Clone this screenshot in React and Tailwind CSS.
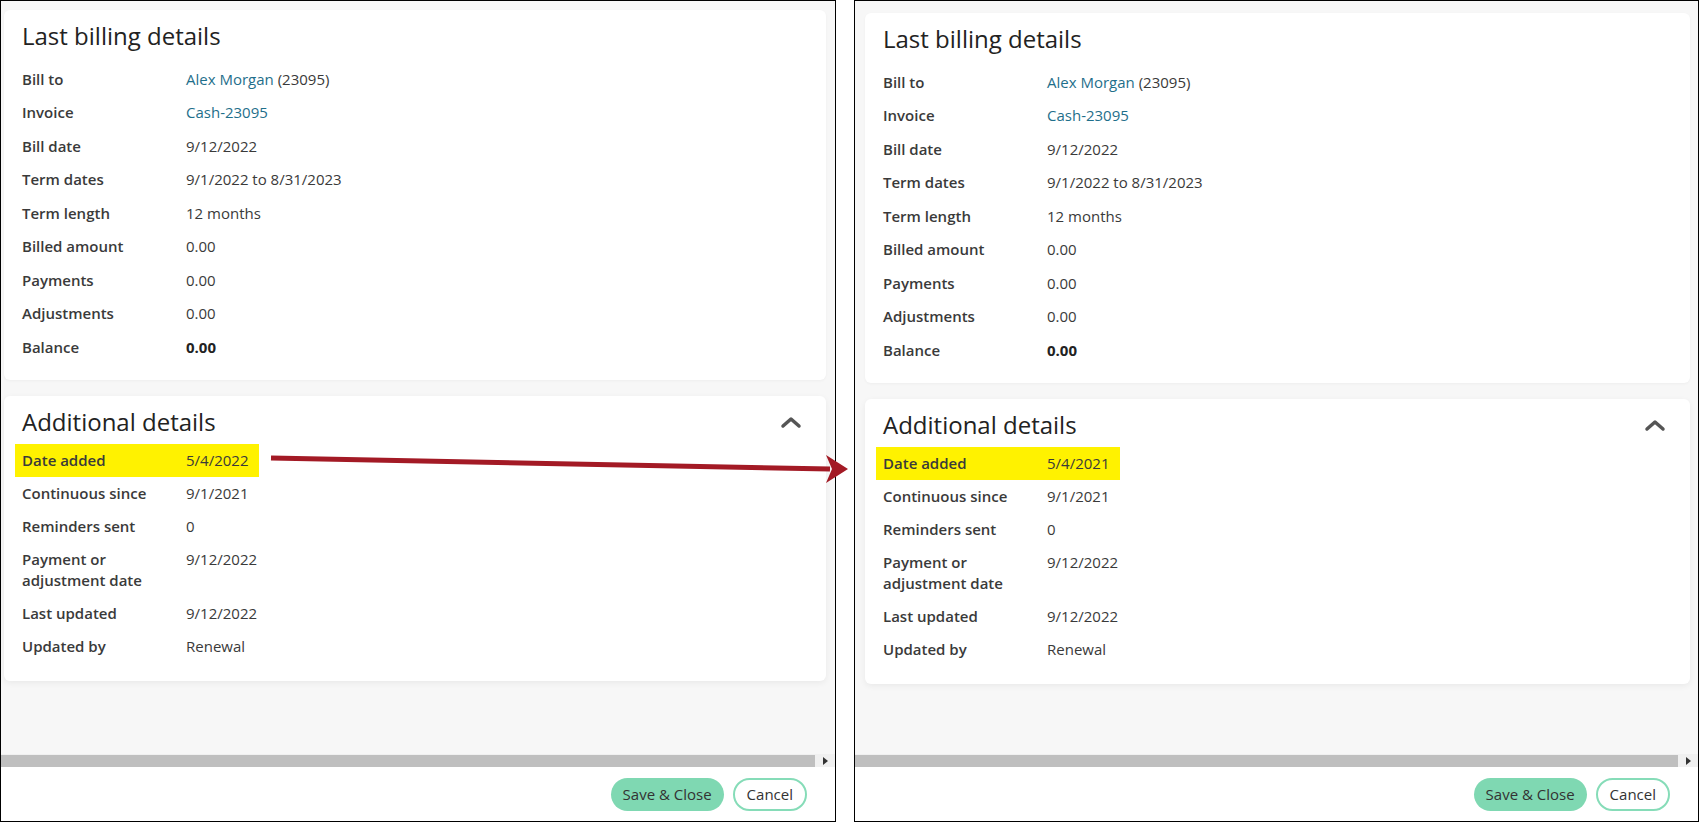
import React from 'react';

const billing = [
  ['Bill to', <><span className="text-[#1f6f8b]">Alex Morgan</span> (23095)</>],
  ['Invoice', <span className="text-[#1f6f8b]">Cash-23095</span>],
  ['Bill date', '9/12/2022'],
  ['Term dates', '9/1/2022 to 8/31/2023'],
  ['Term length', '12 months'],
  ['Billed amount', '0.00'],
  ['Payments', '0.00'],
  ['Adjustments', '0.00'],
  ['Balance', <span className="font-bold text-[#222]">0.00</span>],
];

const Row = ({ label, value, highlight }) => (
  <div
    className={`flex items-center min-h-[33px] py-[6px] leading-[21px] ${
      highlight ? 'bg-[#fff200] -ml-[7px] pl-[7px] w-[244px]' : ''
    }`}
  >
    <div className="w-[164px] font-semibold text-[#3a3a3a] self-start">{label}</div>
    <div className="text-[#3a3a3a] self-start">{value}</div>
  </div>
);

const Panel = ({ dateAdded, shift }) => {
  const extra = [
    ['Date added', dateAdded],
    ['Continuous since', '9/1/2021'],
    ['Reminders sent', '0'],
    [<>Payment or<br />adjustment date</>, '9/12/2022'],
    ['Last updated', '9/12/2022'],
    ['Updated by', 'Renewal'],
  ];
  return (
    <div className="h-[822px] border border-black flex flex-col bg-white" style={{ width: shift ? 845 : 836 }}>
      <div className={`flex-1 bg-[#f7f7f7] flex flex-col gap-4 ${shift ? 'pt-[12px] pl-[10px] pr-[8px]' : 'pt-[9px] pl-[3px] pr-[9px]'}`}>
        <div className="bg-white rounded-md shadow-[0_1px_3px_rgba(0,0,0,0.04)] px-[18px] pt-[10px] pb-[16px]">
          <h2 className="text-[24px] leading-[32px] text-[#222] mb-[10px]">Last billing details</h2>
          <div className="text-[15px]">
            {billing.map(([l, v], i) => (
              <div key={i} className="flex items-center h-[33.5px]">
                <div className="w-[164px] font-semibold text-[#3a3a3a]">{l}</div>
                <div className="text-[#3a3a3a]">{v}</div>
              </div>
            ))}
          </div>
        </div>
        <div className="bg-white rounded-md shadow-[0_2px_6px_rgba(0,0,0,0.06)] px-[18px] pt-[10px] pb-[18px]">
          <div className="flex items-center justify-between">
            <h2 className="text-[24px] leading-[32px] text-[#222]">Additional details</h2>
            <svg width="22" height="14" viewBox="0 0 22 14" className="mr-[6px]">
              <path d="M3 11 L11 4 L19 11" fill="none" stroke="#555" strokeWidth="3.5" strokeLinecap="round" strokeLinejoin="round" />
            </svg>
          </div>
          <div className="text-[15px] mt-[6px]">
            {extra.map(([l, v], i) => (
              <Row key={i} label={l} value={v} highlight={i === 0} />
            ))}
          </div>
        </div>
        <div className="flex-1" />
      </div>
      <div className="h-[13px] bg-[#f0f0f0] flex items-center">
        <div className="flex-1 h-[12px] bg-[#bfbfbf]" />
        <div className="w-[20px] flex justify-center">
          <svg width="5" height="8" viewBox="0 0 5 8"><path d="M0 0 L5 4 L0 8Z" fill="#333" /></svg>
        </div>
      </div>
      <div className="h-[54px] flex items-center justify-end gap-[9px] pr-[28px] bg-white">
        <button className="h-[33px] px-[12px] rounded-full bg-[#7fd8b2] text-[15px] text-[#333]">Save &amp; Close</button>
        <button className="h-[33px] px-[12px] rounded-full border-2 border-[#86dcb8] bg-white text-[15px] text-[#333]">Cancel</button>
      </div>
    </div>
  );
};

export default function App() {
  return (
    <div className="relative w-[1699px] h-[822px] bg-white flex gap-[18px] overflow-hidden" style={{ fontFamily: '"Open Sans", "Liberation Sans", sans-serif' }}>
      <Panel dateAdded="5/4/2022" />
      <Panel dateAdded="5/4/2021" shift />
      <svg className="absolute left-0 top-0 pointer-events-none" width="1699" height="822">
        <line x1="271" y1="458" x2="830" y2="469" stroke="#a31a25" strokeWidth="5" />
        <path d="M826 455 L848 469 L826 483 L832 469 Z" fill="#a31a25" />
      </svg>
    </div>
  );
}
